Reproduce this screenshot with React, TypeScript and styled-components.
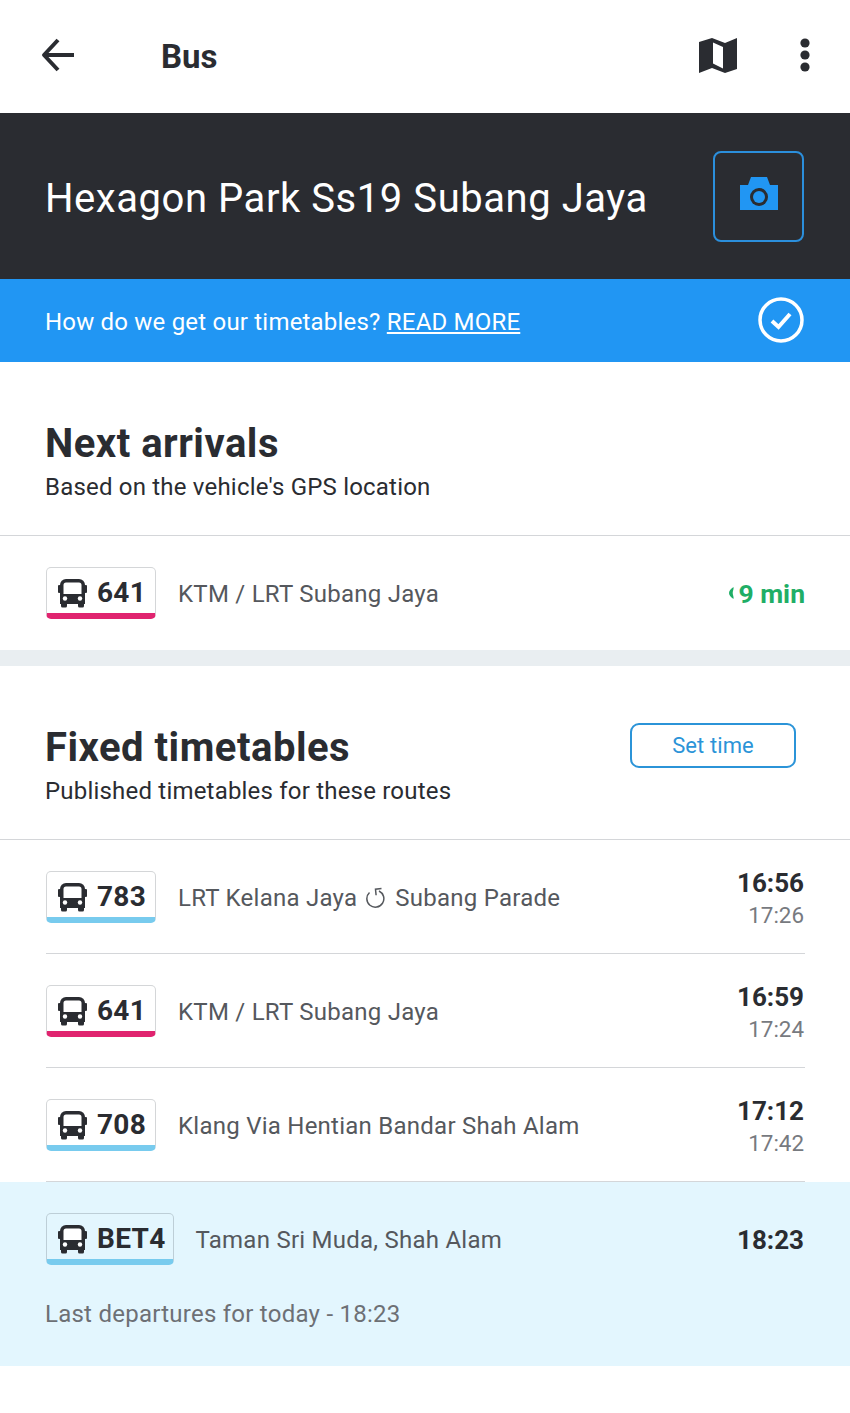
import React from "react";
import styled, { createGlobalStyle } from "styled-components";

const Global = createGlobalStyle`
  html, body { margin: 0; padding: 0; background: #fff; }
  body { font-family: Roboto, "Liberation Sans", sans-serif; color: #2a2c31; }
  * { box-sizing: border-box; }
`;

const Page = styled.div`
  width: 850px;
  height: 1413px;
  overflow: hidden;
  background: #fff;
`;

const TopBar = styled.header`
  height: 113px;
  display: flex;
  align-items: center;
  padding: 0 28px 4px 40px;
`;

const BackIcon = styled.svg`
  width: 36px;
  height: 36px;
  margin-right: 85px;
  flex: none;
`;

const BarTitle = styled.h1`
  flex: 1;
  margin: 0;
  padding-top: 4px;
  font-size: 33px;
  font-weight: 700;
  line-height: 40px;
`;

const MapIcon = styled.svg`
  width: 40px;
  height: 36px;
  margin-right: 61px;
`;

const MoreIcon = styled.svg`
  width: 12px;
  height: 34px;
  margin-right: 11px;
`;

const StopBand = styled.section`
  height: 166px;
  background: #2a2c31;
  display: flex;
  align-items: center;
  justify-content: space-between;
  padding: 0 46px 0 45px;
`;

const StopName = styled.h2`
  margin: 0;
  padding-top: 4px;
  color: #fff;
  font-size: 40px;
  font-weight: 400;
  letter-spacing: 0.55px;
`;

const PhotoButton = styled.button`
  width: 91px;
  height: 91px;
  padding: 0 0 4px;
  background: transparent;
  border: 2px solid #2b8fdc;
  border-radius: 8px;
  display: flex;
  align-items: center;
  justify-content: center;
`;

const InfoBand = styled.div`
  height: 83px;
  background: #2196f3;
  color: #fff;
  display: flex;
  align-items: center;
  justify-content: space-between;
  padding: 2px 46px 0 45px;
  font-size: 24px;
  letter-spacing: 0.2px;
`;

const InfoLink = styled.a`
  text-decoration: underline;
  text-underline-offset: 2px;
`;

const InfoTick = styled.svg`
  width: 46px;
  height: 46px;
  margin-top: -4px;
`;

const SectionHead = styled.div`
  height: 174px;
  padding: 58px 46px 0 45px;
  border-bottom: 1px solid #d4d6d9;
  display: flex;
  justify-content: space-between;
  align-items: flex-start;
`;

const HeadTitle = styled.h3`
  margin: 0;
  font-size: 40px;
  font-weight: 700;
  line-height: 47px;
  letter-spacing: 0.5px;
`;

const HeadNote = styled.p`
  margin: 5px 0 0;
  font-size: 24px;
  line-height: 30px;
  letter-spacing: 0.2px;
`;

const SetTime = styled.button`
  width: 166px;
  height: 45px;
  margin: -1px 8px 0 0;
  background: #fff;
  border: 2px solid #2b94d8;
  border-radius: 9px;
  color: #2b94d8;
  font-family: inherit;
  font-size: 22px;
  letter-spacing: 0.1px;
`;

const Divider = styled.div`
  height: 16px;
  background: #e9eef1;
`;

const Row = styled.div<{ $ruled?: boolean }>`
  height: 114px;
  margin: 0 45px 0 46px;
  display: flex;
  align-items: center;
  box-shadow: ${(p) => (p.$ruled ? "inset 0 -1px 0 #d4d6d9" : "none")};
`;

const Highlight = styled.div`
  height: 184px;
  background: #e3f6fe;
`;

const Note = styled.p`
  margin: 3px 45px 0;
  font-size: 24px;
  line-height: 30px;
  letter-spacing: 0.25px;
  color: #6d7075;
`;

const Badge = styled.div<{ $line: string }>`
  height: 52px;
  min-width: 110px;
  flex: none;
  display: flex;
  align-items: center;
  gap: 10px;
  padding: 5px 7px 0 11px;
  margin-bottom: 1px;
  border: 1px solid rgba(40, 50, 60, 0.2);
  border-bottom: 6px solid ${(p) => p.$line};
  border-radius: 5px;
`;

const BadgeLabel = styled.span`
  font-size: 28px;
  font-weight: 700;
  letter-spacing: 0.3px;
  line-height: 34px;
`;

const Destination = styled.span`
  flex: 1;
  margin-left: 22px;
  padding-top: 2px;
  font-size: 24px;
  color: #55585d;
  letter-spacing: 0.25px;
  display: flex;
  align-items: center;
  gap: 9px;
`;

const Times = styled.div<{ $solo?: boolean }>`
  text-align: right;
  display: flex;
  flex-direction: column;
  gap: 2px;
  padding-top: ${(p) => (p.$solo ? "2px" : "4px")};
  margin-right: 1px;
`;

const Main = styled.span`
  font-size: 26px;
  font-weight: 700;
  line-height: 30px;
`;

const Later = styled.span`
  font-size: 22.4px;
  line-height: 30px;
  color: #777a7f;
`;

const Live = styled.span`
  display: flex;
  align-items: center;
  gap: 4px;
  font-size: 26.5px;
  font-weight: 700;
  color: #1fae66;
`;

const BusIcon = () => (
  <svg width="29" height="30" viewBox="0 0 29 30" fill="none">
    <path d="M8 1h13a6 6 0 0 1 6 6v19H2V7a6 6 0 0 1 6-6z" fill="#2a2c31" />
    <path d="M8 4.5h13a2.5 2.5 0 0 1 2.5 2.500v9h-18V7A2.5 2.5 0 0 1 8 4.500z" fill="#fff" />
    <rect x="0" y="7" width="2.4" height="8" rx="1" fill="#2a2c31" />
    <rect x="26.6" y="7" width="2.4" height="8" rx="1" fill="#2a2c31" />
    <rect x="3" y="24" width="6" height="5.5" rx="1.5" fill="#2a2c31" />
    <rect x="20" y="24" width="6" height="5.5" rx="1.5" fill="#2a2c31" />
    <circle cx="7" cy="20.5" r="2.2" fill="#fff" />
    <circle cx="22" cy="20.5" r="2.2" fill="#fff" />
  </svg>
);

const LoopIcon = () => (
  <svg width="20" height="22" viewBox="6 4 20 22" fill="none" stroke="#55585d" strokeWidth="1.5">
    <path d="M9.5 9.5A8.5 8.5 0 1 0 19 8" />
    <path d="M21.5 5.5L15.5 6.2l.6 6" />
  </svg>
);

type Route = { line: string; number: string; dest: React.ReactNode; first: string; next?: string };

const PINK = "#e0246f";
const SKY = "#78cbee";

const routes: Route[] = [
  {
    line: SKY,
    number: "783",
    dest: (
      <>
        LRT Kelana Jaya <LoopIcon /> Subang Parade
      </>
    ),
    first: "16:56",
    next: "17:26",
  },
  { line: PINK, number: "641", dest: "KTM / LRT Subang Jaya", first: "16:59", next: "17:24" },
  { line: SKY, number: "708", dest: "Klang Via Hentian Bandar Shah Alam", first: "17:12", next: "17:42" },
];

const RouteBadge = ({ line, number }: { line: string; number: string }) => (
  <Badge $line={line}>
    <BusIcon />
    <BadgeLabel>{number}</BadgeLabel>
  </Badge>
);

export default function App() {
  return (
    <Page>
      <Global />
      <TopBar>
        <BackIcon viewBox="0 0 36 36" fill="none" stroke="#2a2c31" strokeWidth="4" strokeLinejoin="round">
          <path d="M34 18H5" />
          <path d="M18 3L4 18l14 15" />
        </BackIcon>
        <BarTitle>Bus</BarTitle>
        <MapIcon viewBox="0 0 40 36" fill="#2a2c31" fillRule="evenodd">
          <path d="M1 5l13-4 13 5 12-5v31l-12 4-13-5-13 5zM15 5.500v21l10 5v-21.500z" />
        </MapIcon>
        <MoreIcon viewBox="0 0 12 34" fill="#2a2c31">
          <circle cx="6" cy="5" r="4.6" />
          <circle cx="6" cy="17" r="4.6" />
          <circle cx="6" cy="29" r="4.6" />
        </MoreIcon>
      </TopBar>

      <StopBand>
        <StopName>Hexagon Park Ss19 Subang Jaya</StopName>
        <PhotoButton aria-label="Add photo">
          <svg width="38" height="34" viewBox="0 0 38 34" fill="#2196f3">
            <path d="M11 0h16l3 8H8z" />
            <rect x="0" y="8" width="38" height="25" />
            <circle cx="19" cy="20" r="9" fill="#2a2c31" />
            <circle cx="19" cy="20" r="6" />
          </svg>
        </PhotoButton>
      </StopBand>

      <InfoBand>
        <span>
          How do we get our timetables? <InfoLink>READ MORE</InfoLink>
        </span>
        <InfoTick viewBox="0 0 46 46" fill="none" stroke="#fff">
          <circle cx="23" cy="23" r="21" strokeWidth="3.5" />
          <path d="M14 24l6.500 6L32 17" strokeWidth="4" />
        </InfoTick>
      </InfoBand>

      <SectionHead>
        <div>
          <HeadTitle>Next arrivals</HeadTitle>
          <HeadNote>Based on the vehicle's GPS location</HeadNote>
        </div>
      </SectionHead>
      <Row>
        <RouteBadge line={PINK} number="641" />
        <Destination>KTM / LRT Subang Jaya</Destination>
        <Live>
          <svg width="5" height="12" viewBox="0 0 5 12" fill="#1fae66">
            <path d="M4.500 0C1.500 2 0 4 0 6s1.500 4 4.500 6c.5-2-.8-4-.8-6s1.300-4 .8-6z" />
          </svg>
          9 min
        </Live>
      </Row>

      <Divider />

      <SectionHead>
        <div>
          <HeadTitle>Fixed timetables</HeadTitle>
          <HeadNote>Published timetables for these routes</HeadNote>
        </div>
        <SetTime>Set time</SetTime>
      </SectionHead>
      {routes.map((r) => (
        <Row key={r.number} $ruled>
          <RouteBadge line={r.line} number={r.number} />
          <Destination>{r.dest}</Destination>
          <Times>
            <Main>{r.first}</Main>
            <Later>{r.next}</Later>
          </Times>
        </Row>
      ))}
      <Highlight>
        <Row>
          <RouteBadge line={SKY} number="BET4" />
          <Destination>Taman Sri Muda, Shah Alam</Destination>
          <Times $solo>
            <Main>18:23</Main>
          </Times>
        </Row>
        <Note>Last departures for today - 18:23</Note>
      </Highlight>
    </Page>
  );
}
